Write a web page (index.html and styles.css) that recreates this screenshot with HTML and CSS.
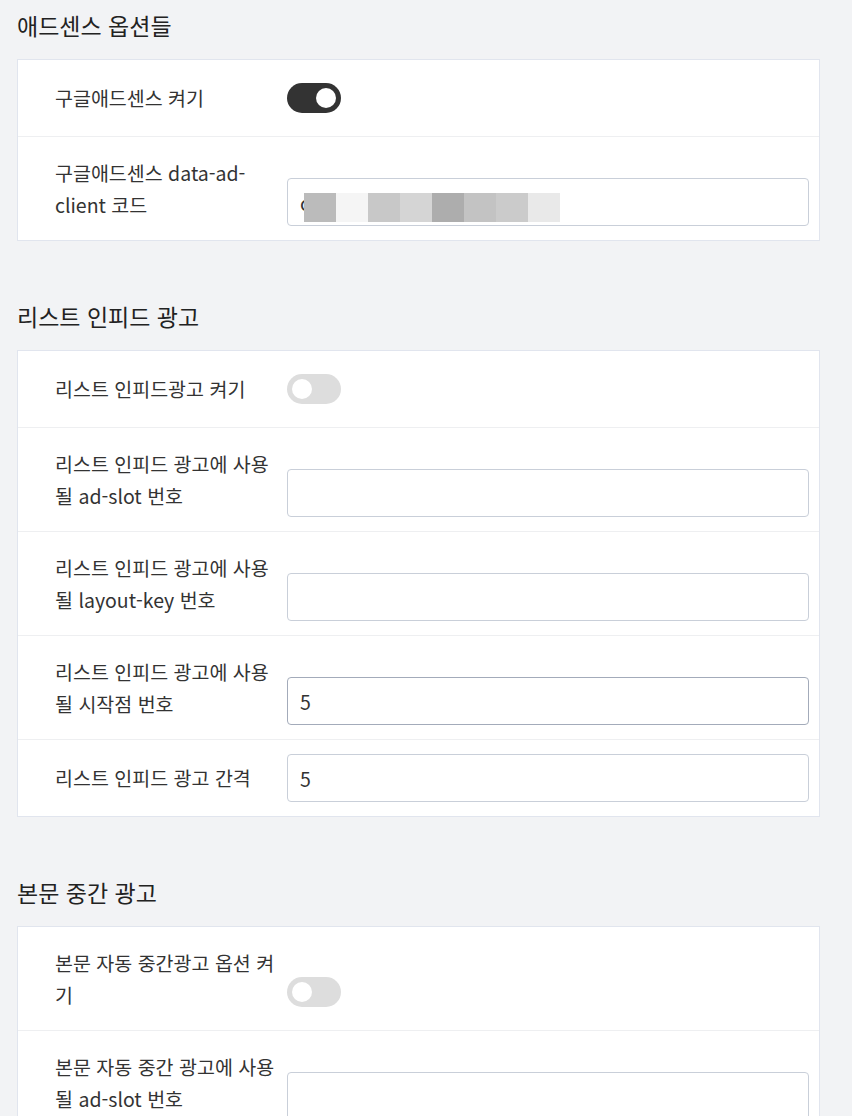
FILE: index.html
```html
<!doctype html>
<html lang="ko">
    <head>
        <meta charset="utf-8">
        <title>애드센스 설정</title>
        <link rel="stylesheet" href="styles.css">
    </head>
    <body>
        <div class="settings">
            <!-- 애드센스 -->
            <section class="section">
                <h2 class="section-title">애드센스 옵션들</h2>
                <div class="card">
                    <div class="row">
                        <label class="row-label" for="adsenseOn">구글애드센스 켜기</label>
                        <div class="row-control">
                            <label class="switch">
                                <input type="checkbox" id="adsenseOn" checked>
                                <span class="slider"></span>
                            </label>
                        </div>
                    </div>
                    <div class="row">
                        <label class="row-label" for="adClient">구글애드센스 data-ad-client 코드</label>
                        <div class="row-control">
                            <div class="masked">
                                <input type="text" class="text-input" id="adClient" value="c">
                                <div class="mosaic">
                                    <span class="m1"></span><span class="m2"></span><span class="m3"></span><span class="m4"></span>
                                    <span class="m5"></span><span class="m6"></span><span class="m7"></span><span class="m8"></span>
                                </div>
                            </div>
                        </div>
                    </div>
                </div>
            </section>

            <!-- 리스트 인피드 -->
            <section class="section">
                <h2 class="section-title">리스트 인피드 광고</h2>
                <div class="card">
                    <div class="row">
                        <label class="row-label" for="infeedOn">리스트 인피드광고 켜기</label>
                        <div class="row-control">
                            <label class="switch">
                                <input type="checkbox" id="infeedOn">
                                <span class="slider"></span>
                            </label>
                        </div>
                    </div>
                    <div class="row">
                        <label class="row-label" for="infeedSlot">리스트 인피드 광고에 사용될 ad-slot 번호</label>
                        <div class="row-control">
                            <input type="text" class="text-input" id="infeedSlot">
                        </div>
                    </div>
                    <div class="row">
                        <label class="row-label" for="infeedKey">리스트 인피드 광고에 사용될 layout-key 번호</label>
                        <div class="row-control">
                            <input type="text" class="text-input" id="infeedKey">
                        </div>
                    </div>
                    <div class="row">
                        <label class="row-label" for="infeedStart">리스트 인피드 광고에 사용될 시작점 번호</label>
                        <div class="row-control">
                            <input type="text" class="text-input focused" id="infeedStart" value="5">
                        </div>
                    </div>
                    <div class="row">
                        <label class="row-label" for="infeedGap">리스트 인피드 광고 간격</label>
                        <div class="row-control">
                            <input type="text" class="text-input" id="infeedGap" value="5">
                        </div>
                    </div>
                </div>
            </section>

            <!-- 본문 중간 -->
            <section class="section">
                <h2 class="section-title">본문 중간 광고</h2>
                <div class="card">
                    <div class="row">
                        <label class="row-label" for="middleOn">본문 자동 중간광고 옵션 켜기</label>
                        <div class="row-control">
                            <label class="switch">
                                <input type="checkbox" id="middleOn">
                                <span class="slider"></span>
                            </label>
                        </div>
                    </div>
                    <div class="row">
                        <label class="row-label" for="middleSlot">본문 자동 중간 광고에 사용될 ad-slot 번호</label>
                        <div class="row-control">
                            <input type="text" class="text-input" id="middleSlot">
                        </div>
                    </div>
                </div>
            </section>
        </div>
    </body>
</html>
```

FILE: styles.css
```css
html, body {
    margin: 0;
    background-color: #f2f3f5;
}

body {
    font-family: "Noto Sans CJK KR", "Noto Sans", sans-serif;
    color: #333;
}

.settings {
    padding: 10px 32px 40px 17px;
}

.section {
    margin-bottom: 60px;
}

.section-title {
    margin: 0 0 19px;
    font-size: 23px;
    font-weight: 400;
    line-height: 30px;
    color: #222;
}

.card {
    background-color: #fff;
    border: 1px solid #e1e5ee;
}

.row {
    display: flex;
    padding: 14px 10px 14px 37px;
    border-top: 1px solid #eeeff1;
}

.row:first-child {
    border-top: none;
}

.row-label {
    flex: 0 0 220px;
    padding: 6px 12px 6px 0;
    align-self: center;
    font-size: 19.5px;
    line-height: 31.5px;
    color: #333;
}

.row-control {
    flex: 1;
    height: 48px;
    align-self: flex-end;
    display: flex;
    align-items: center;
}

.text-input {
    box-sizing: border-box;
    width: 100%;
    height: 48px;
    padding: 0 12px;
    border: 1px solid #c9cfd9;
    border-radius: 4px;
    font-family: "Noto Sans CJK KR", "Noto Sans", sans-serif;
    font-size: 19.5px;
    color: #333;
    background-color: #fff;
    outline: none;
}

.text-input.focused {
    border-color: #a3abba;
}

/* client code is blurred out in the capture */
.masked {
    position: relative;
    width: 100%;
}

.mosaic {
    position: absolute;
    left: 17px;
    top: 15px;
    display: flex;
    height: 29px;
}

.mosaic span {
    width: 32px;
}

.m1 { background-color: #bbbbbb; }
.m2 { background-color: #f5f5f5; }
.m3 { background-color: #c8c8c8; }
.m4 { background-color: #d5d5d5; }
.m5 { background-color: #adadad; }
.m6 { background-color: #c3c3c3; }
.m7 { background-color: #cbcbcb; }
.m8 { background-color: #e9e9e9; }

.switch {
    position: relative;
    display: inline-block;
    width: 54px;
    height: 30px;
}

.switch input {
    display: none;
}

.slider {
    position: absolute;
    top: 0;
    left: 0;
    right: 0;
    bottom: 0;
    border-radius: 15px;
    background-color: #dddddd;
    cursor: pointer;
}

.slider::before {
    content: "";
    position: absolute;
    top: 5px;
    left: 5px;
    width: 20px;
    height: 20px;
    border-radius: 50%;
    background-color: #fff;
}

.switch input:checked + .slider {
    background-color: #333;
}

.switch input:checked + .slider::before {
    left: 29px;
}
```
